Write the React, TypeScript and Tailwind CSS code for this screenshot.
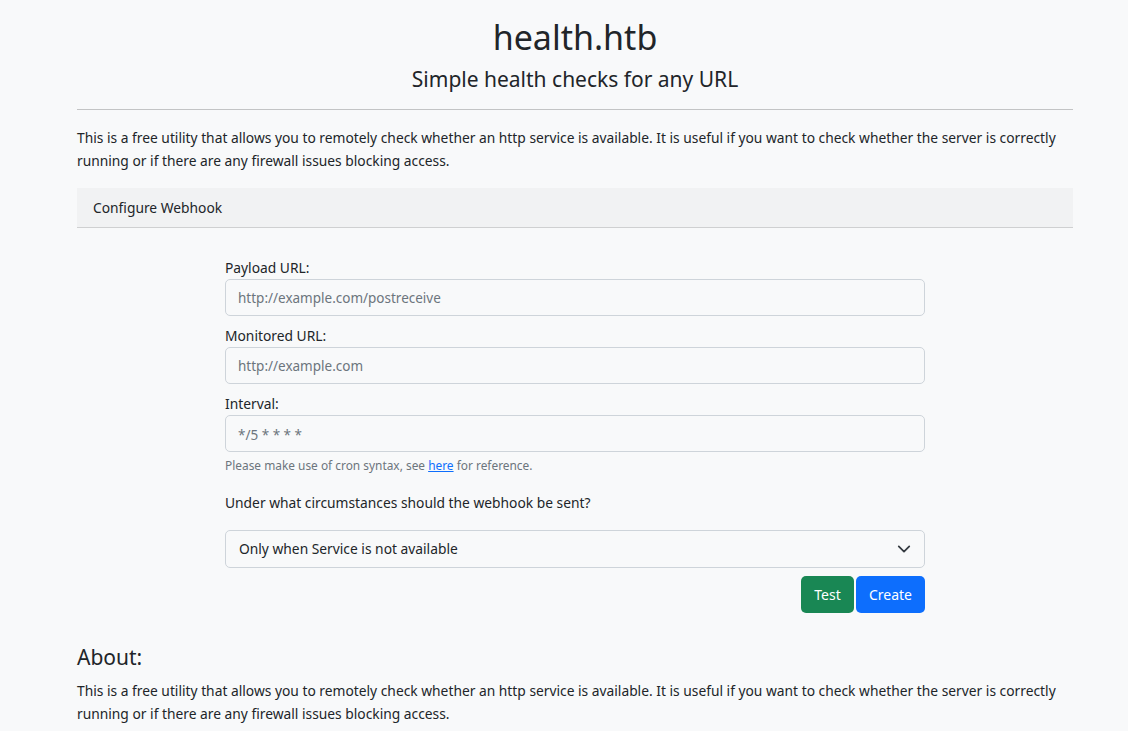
import React from "react";

export default function App() {
  return (
    <div className="min-h-[731px] bg-[#f8f9fa] text-[#212529]" style={{ fontFamily: '"Noto Sans", sans-serif' }}>
      <div className="ml-[77px] w-[996px] pt-[16px]">
        <h1 className="text-center text-[34px] leading-[42px] font-normal">health.htb</h1>
        <h2 className="text-center text-[21px] leading-[30px] mt-[6px] font-normal">Simple health checks for any URL</h2>
        <hr className="mt-[15px] border-0 border-t border-[#c3c4c5]" />
        <p className="mt-[16px] text-[13.8px] leading-[23px]">
          This is a free utility that allows you to remotely check whether an http service is available. It is useful if you want to check whether the server is correctly running or if there are any firewall issues blocking access.
        </p>
        <div className="mt-[16px] h-[40px] bg-[#f1f2f3] border-b border-[#cfd0d1] flex items-center px-[16px] pt-[2px] text-[13.8px]">
          Configure Webhook
        </div>
        <div className="w-[700px] mx-auto pt-[29px] text-[13.8px]">
          <label className="block leading-[22px]">Payload URL:</label>
          <div className="h-[37px] rounded-[5px] border border-[#ced4da] bg-[#f8f9fa] flex items-center px-[12px] pt-[2px] text-[#6c757d] text-[13.5px]">http://example.com/postreceive</div>
          <label className="block leading-[22px] mt-[9px]">Monitored URL:</label>
          <div className="h-[37px] rounded-[5px] border border-[#ced4da] bg-[#f8f9fa] flex items-center px-[12px] pt-[2px] text-[#6c757d] text-[13.5px]">http://example.com</div>
          <label className="block leading-[22px] mt-[9px]">Interval:</label>
          <div className="h-[37px] rounded-[5px] border border-[#ced4da] bg-[#f8f9fa] flex items-center px-[12px] pt-[3px] text-[#6c757d] text-[13.5px]">*/5 * * * *</div>
          <div className="mt-[4px] text-[11.9px] leading-[18px] text-[#6c757d]">
            Please make use of cron syntax, see <span className="text-[#0d6efd] underline">here</span> for reference.
          </div>
          <div className="mt-[18px] leading-[22px]">Under what circumstances should the webhook be sent?</div>
          <div className="mt-[16px] h-[38px] rounded-[5px] border border-[#ced4da] bg-[#f8f9fa] flex items-center justify-between pl-[13px] pr-[13px]">
            <span>Only when Service is not available</span>
            <svg width="14" height="14" viewBox="0 0 16 16" fill="none" stroke="#343a40" strokeWidth="2" strokeLinecap="round" strokeLinejoin="round"><path d="M2 5l6 6 6-6" /></svg>
          </div>
          <div className="mt-[8px] flex justify-end gap-[2px]">
            <button className="h-[37px] w-[53px] rounded-[5px] bg-[#198754] text-white text-[14px]">Test</button>
            <button className="h-[37px] w-[69px] rounded-[5px] bg-[#0d6efd] text-white text-[14px]">Create</button>
          </div>
        </div>
        <h3 className="mt-[29px] text-[21px] leading-[30px] font-normal">About:</h3>
        <p className="mt-[7px] text-[13.8px] leading-[23px]">
          This is a free utility that allows you to remotely check whether an http service is available. It is useful if you want to check whether the server is correctly running or if there are any firewall issues blocking access.
        </p>
      </div>
    </div>
  );
}
